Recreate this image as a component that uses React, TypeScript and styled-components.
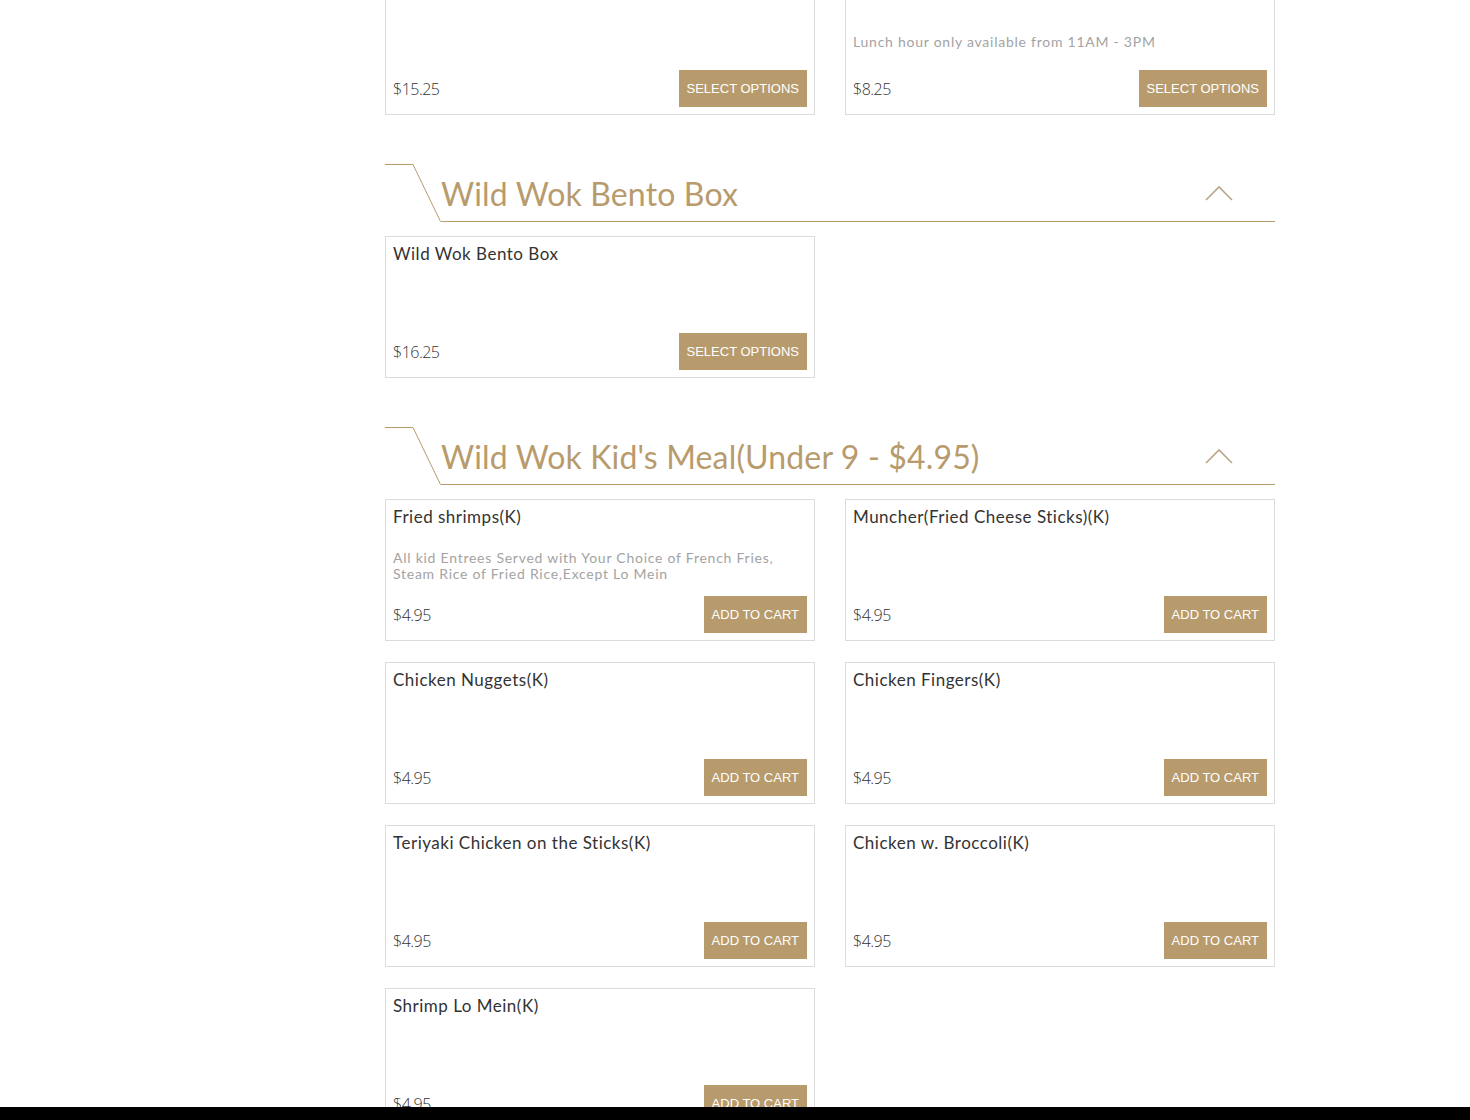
import React from 'react'
import styled, { createGlobalStyle } from 'styled-components'

const GlobalStyle = createGlobalStyle`
  html, body {
    margin: 0;
    padding: 0;
    background: #fff;
    overflow: hidden;
  }
  body {
    font-family: 'Lato', 'Open Sans', sans-serif;
    color: #333;
  }
`

const gold = '#b89b6c'

const Page = styled.div`
  width: 890px;
  margin: -27px 0 0 385px;
  padding-bottom: 40px;
`

const Section = styled.section`
  margin-bottom: 49px;
`

const Header = styled.div`
  display: flex;
  align-items: stretch;
  height: 58px;
  margin-bottom: 14px;
`

const Corner = styled.svg`
  flex: 0 0 56px;
  display: block;
`

const TitleBar = styled.div`
  flex: 1;
  display: flex;
  align-items: center;
  justify-content: space-between;
  border-bottom: 1px solid ${gold};
  padding-right: 42px;
`

const Title = styled.h2`
  margin: 2px 0 0;
  font-family: 'Lato', sans-serif;
  font-weight: 400;
  font-size: 32px;
  letter-spacing: 0.15px;
  color: ${gold};
`

const Grid = styled.div`
  display: grid;
  grid-template-columns: 430px 430px;
  column-gap: 30px;
  row-gap: 21px;
`

const Card = styled.div`
  box-sizing: border-box;
  height: 142px;
  border: 1px solid #dcdcdc;
  padding: 7px;
  display: flex;
  flex-direction: column;
`

const ItemName = styled.div`
  font-family: 'Lato', sans-serif;
  font-size: 17px;
  line-height: 19px;
  letter-spacing: 0.5px;
  color: #333;
`

const Desc = styled.div<{ $gap: number }>`
  margin-top: auto;
  margin-bottom: ${p => p.$gap}px;
  font-family: 'Lato', sans-serif;
  font-size: 14px;
  line-height: 16px;
  letter-spacing: 0.75px;
  color: #a3a3a3;
  padding-right: 20px;
`

const Footer = styled.div<{ $push: boolean }>`
  display: flex;
  align-items: center;
  justify-content: space-between;
  margin-top: ${p => (p.$push ? 'auto' : '14px')};
`

const Price = styled.span`
  font-family: 'Open Sans', sans-serif;
  font-weight: 300;
  font-size: 16px;
  color: #333;
  letter-spacing: -0.5px;
`

const Button = styled.button`
  border: none;
  background: ${gold};
  color: #fff;
  font-family: 'Liberation Sans', Arial, sans-serif;
  font-size: 13px;
  text-transform: uppercase;
  height: 37px;
  padding: 0 8px;
  cursor: pointer;
`

const BottomBar = styled.div`
  position: fixed;
  left: 0;
  right: 0;
  bottom: 0;
  height: 13px;
  background: #000;
`

type Item = { name: string; price: string; desc?: string; gap?: number; options?: boolean }

function MenuCard({ item }: { item: Item }) {
  return (
    <Card>
      <ItemName>{item.name}</ItemName>
      {item.desc && <Desc $gap={item.gap ?? 0}>{item.desc}</Desc>}
      <Footer $push={!item.desc}>
        <Price>{item.price}</Price>
        <Button>{item.options ? 'Select Options' : 'Add to Cart'}</Button>
      </Footer>
    </Card>
  )
}

function SectionHeader({ title }: { title: string }) {
  return (
    <Header>
      <Corner width="56" height="58" viewBox="0 0 56 58">
        <path d="M0 0.5 H28 L55.5 57.5" fill="none" stroke={gold} strokeWidth="1" />
      </Corner>
      <TitleBar>
        <Title>{title}</Title>
        <svg width="28" height="16" viewBox="0 0 28 16">
          <path d="M1 15 L14 2 L27 15" fill="none" stroke="#b9a68a" strokeWidth="1.6" />
        </svg>
      </TitleBar>
    </Header>
  )
}

const lunch: Item[] = [
  { name: 'Lunch Special Combo', price: '$15.25', options: true },
  {
    name: 'Lunch Special',
    price: '$8.25',
    desc: 'Lunch hour only available from 11AM - 3PM',
    gap: 6,
    options: true,
  },
]

const bento: Item[] = [{ name: 'Wild Wok Bento Box', price: '$16.25', options: true }]

const kids: Item[] = [
  {
    name: 'Fried shrimps(K)',
    price: '$4.95',
    desc: 'All kid Entrees Served with Your Choice of French Fries, Steam Rice of Fried Rice,Except Lo Mein',
  },
  { name: 'Muncher(Fried Cheese Sticks)(K)', price: '$4.95' },
  { name: 'Chicken Nuggets(K)', price: '$4.95' },
  { name: 'Chicken Fingers(K)', price: '$4.95' },
  { name: 'Teriyaki Chicken on the Sticks(K)', price: '$4.95' },
  { name: 'Chicken w. Broccoli(K)', price: '$4.95' },
  { name: 'Shrimp Lo Mein(K)', price: '$4.95' },
]

export default function App() {
  return (
    <>
      <GlobalStyle />
      <Page>
        <Section>
          <Grid>
            {lunch.map(i => (
              <MenuCard key={i.name} item={i} />
            ))}
          </Grid>
        </Section>
        <Section>
          <SectionHeader title="Wild Wok Bento Box" />
          <Grid>
            {bento.map(i => (
              <MenuCard key={i.name} item={i} />
            ))}
          </Grid>
        </Section>
        <Section>
          <SectionHeader title="Wild Wok Kid's Meal(Under 9 - $4.95)" />
          <Grid>
            {kids.map(i => (
              <MenuCard key={i.name} item={i} />
            ))}
          </Grid>
        </Section>
      </Page>
      <BottomBar />
    </>
  )
}
